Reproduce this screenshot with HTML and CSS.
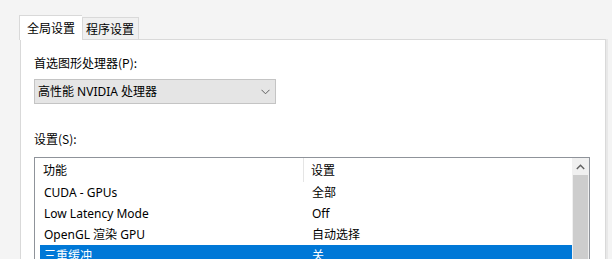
FILE: index.html
```html
<!DOCTYPE html>
<html lang="zh">
<head>
<meta charset="utf-8">
<link rel="stylesheet" href="styles.css">
</head>
<body>
<div class="window">
  <div class="tabs">
    <div class="tab active">全局设置</div>
    <div class="tab">程序设置</div>
  </div>
  <div class="panel">
    <div class="label">首选图形处理器(P):</div>
    <div class="select">
      <span>高性能 NVIDIA 处理器</span>
      <svg class="chev" width="9" height="6" viewBox="0 0 9 6"><polyline points="0.5,0.8 4.5,4.8 8.5,0.8" fill="none" stroke="#606060" stroke-width="1"/></svg>
    </div>
    <div class="label label-s">设置(S):</div>
    <div class="list">
      <div class="list-body">
        <div class="header">
          <div class="col1 hcell">功能</div>
          <div class="col2 hcell">设置</div>
        </div>
        <div class="row"><div class="col1">CUDA - GPUs</div><div class="col2">全部</div></div>
        <div class="row"><div class="col1">Low Latency Mode</div><div class="col2">Off</div></div>
        <div class="row"><div class="col1">OpenGL 渲染 GPU</div><div class="col2">自动选择</div></div>
        <div class="row selected"><div class="col1">三重缓冲</div><div class="col2">关</div></div>
      </div>
      <div class="scrollbar">
        <div class="sb-btn">
          <svg width="9" height="6" viewBox="0 0 9 6"><polyline points="0.8,5 4.5,1.3 8.2,5" fill="none" stroke="#606060" stroke-width="1.4"/></svg>
        </div>
        <div class="sb-thumb"></div>
      </div>
    </div>
  </div>
</div>
</body>
</html>
```
FILE: styles.css
```css
html, body {
  margin: 0;
  padding: 0;
  background: #f4f4f4;
  overflow: hidden;
}
body {
  font-family: "Noto Sans", "Noto Sans CJK SC", sans-serif;
  font-size: 12px;
  color: #000;
}
.window {
  padding: 15px 6px 0 20px;
  height: 259px;
  box-sizing: border-box;
}
.tabs {
  display: flex;
  align-items: flex-end;
  height: 25px;
  position: relative;
  z-index: 1;
}
.tab {
  height: 22px;
  line-height: 22px;
  padding: 0 3px;
  background: #f0f0f0;
  border: 1px solid #d9d9d9;
  border-bottom: none;
  box-sizing: border-box;
  width: 57px;
  margin-bottom: 1px;
  font-family: "Noto Sans CJK SC", sans-serif;
}
.tab.active {
  background: #fff;
  height: 25px;
  line-height: 23px;
  width: 63px;
  margin-left: -1px;
  margin-bottom: 0;
  padding-left: 7px;
  border-right: none;
}
.tab.active + .tab {
  border-left: 1px solid #d9d9d9;
}
.panel {
  margin-top: -1px;
  background: #fff;
  border: 1px solid #d9d9d9;
  box-shadow: 2px 0 0 #e8e8e8;
  height: 260px;
  padding: 15px 15px 0 13px;
  box-sizing: border-box;
}
.label {
  height: 16px;
  line-height: 16px;
  font-family: "Noto Sans CJK SC", sans-serif;
}
.select {
  margin-top: 8px;
  width: 242px;
  height: 25px;
  box-sizing: border-box;
  background: #e5e5e5;
  border: 1px solid #c4c4c4;
  display: flex;
  align-items: center;
  justify-content: space-between;
  padding: 0 5px 0 3px;
}
.select span {
  line-height: 16px;
}
.chev {
  display: block;
  margin-top: 1px;
}
.label-s {
  margin-top: 27px;
}
.list {
  margin-top: 10px;
  border: 1px solid #8f939a;
  border-bottom: none;
  height: 110px;
  display: flex;
  box-sizing: border-box;
}
.list-body {
  flex: 1;
  display: flex;
  flex-direction: column;
}
.header {
  display: flex;
  height: 24px;
  align-items: center;
}
.hcell {
  height: 24px;
  line-height: 24px;
  font-family: "Noto Sans CJK SC", sans-serif;
}
.header .col1 {
  width: 260px;
  padding-left: 8px;
  border-right: 1px solid #e5e5e5;
}
.header .col2 {
  padding-left: 7px;
}
.row {
  display: flex;
  height: 21px;
  line-height: 21px;
  margin-left: 5px;
}
.row .col1 {
  width: 260px;
  padding-left: 4px;
}
.row .col2 {
  padding-left: 8px;
}
.row.selected {
  background: #0078d7;
  color: #fff;
}
.col2, .col1 {
  white-space: nowrap;
}
.scrollbar {
  width: 17px;
  background: #f0f0f0;
  display: flex;
  flex-direction: column;
}
.sb-btn {
  height: 17px;
  display: flex;
  align-items: center;
  justify-content: center;
}
.sb-btn svg {
  display: block;
}
.sb-thumb {
  flex: 1;
  margin: 0 1px 0 1px;
  background: #cdcdcd;
}
```
